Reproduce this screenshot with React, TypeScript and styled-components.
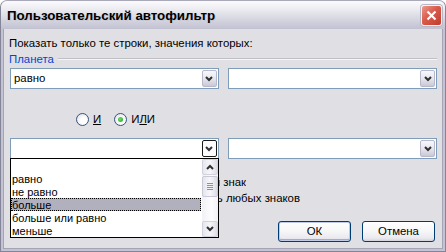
import styled, { createGlobalStyle } from 'styled-components';

const GlobalStyle = createGlobalStyle`
  html, body {
    margin: 0;
    padding: 0;
    background: #ffffff;
    overflow: hidden;
  }
  body {
    font-family: "Liberation Sans", Arial, sans-serif;
    font-size: 11.4px;
    color: #000;
  }
`;

const Window = styled.div`
  width: 446px;
  height: 252px;
  box-sizing: border-box;
  display: flex;
  flex-direction: column;
  background: #c4c3d3;
  border: 1px solid #85859a;
  border-top-color: #a9a9b9;
  border-radius: 7px 7px 0 0;
  overflow: hidden;
`;

const TitleBar = styled.div`
  height: 28px;
  flex: none;
  display: flex;
  align-items: center;
  justify-content: space-between;
  padding: 0 3px 0 6px;
  background: linear-gradient(#fbfbfd 0%, #f1f1f5 20%, #dcdce5 55%, #c2c1d2 100%);
`;

const Title = styled.span`
  font-family: "Liberation Sans", Arial, sans-serif;
  font-weight: bold;
  font-size: 13.3px;
  color: #000;
  text-shadow: 1px 1px 0 #c8c8d2;
`;

const CloseButton = styled.div`
  width: 21px;
  height: 21px;
  box-sizing: border-box;
  border: 1px solid #f4f4f8;
  border-radius: 3px;
  background: linear-gradient(135deg, #ea9a8c 0%, #d9594a 45%, #c03d2e 100%);
  display: flex;
  align-items: center;
  justify-content: center;
  box-shadow: 0 0 0 1px #b6b6c4;
`;

const Content = styled.div`
  flex: 1;
  margin: 0 2px 2px;
  background: #e0dfe3;
  border: 1px solid #a4a4b6;
  border-top: none;
  display: flex;
  flex-direction: column;
  padding: 8px 5px 0 5px;
`;

const Prompt = styled.div`
  line-height: 13px;
`;

const GroupHeader = styled.div`
  display: flex;
  align-items: center;
  gap: 4px;
  margin-top: 3px;
  line-height: 13px;
  color: #0046d5;
`;

const GroupLine = styled.div`
  flex: 1;
  height: 0;
  margin-top: -1px;
  border-top: 1px solid #c0bfc6;
  border-bottom: 1px solid #f6f6f8;
`;

const ComboRow = styled.div<{ $top: number }>`
  display: flex;
  gap: 9px;
  margin-top: ${(p) => p.$top}px;
  padding-left: 1px;
`;

const Combo = styled.div<{ $w: number }>`
  position: relative;
  width: ${(p) => p.$w}px;
  height: 21px;
  box-sizing: border-box;
  border: 1px solid #7f9db9;
  background: #fff;
  display: flex;
  align-items: center;
  justify-content: space-between;
  padding: 1px;
`;

const ComboValue = styled.span`
  padding-left: 2px;
  line-height: 13px;
`;

const DropButton = styled.div<{ $pressed?: boolean }>`
  width: 15px;
  height: 17px;
  box-sizing: border-box;
  display: flex;
  align-items: center;
  justify-content: center;
  border-radius: 2px;
  border: 1px solid ${(p) => (p.$pressed ? '#1a1a1a' : '#b8b8cc')};
  background: ${(p) =>
    p.$pressed ? '#fbfbfd' : 'linear-gradient(#f8f8fb 0%, #e4e4ec 55%, #c9c8d6 100%)'};
`;

const RadioRow = styled.div`
  display: flex;
  align-items: center;
  margin-top: 24px;
  padding-left: 67px;
  height: 13px;
`;

const RadioItem = styled.label`
  display: flex;
  align-items: center;
  gap: 4px;
  margin-right: 13px;
  line-height: 13px;
`;

const RadioCircle = styled.span<{ $checked?: boolean }>`
  width: 13px;
  height: 13px;
  box-sizing: border-box;
  border-radius: 50%;
  border: 1px solid #33557b;
  background: radial-gradient(circle at 60% 60%, #ffffff 30%, #dadae2 100%);
  display: flex;
  align-items: center;
  justify-content: center;
  &::after {
    content: '';
    display: ${(p) => (p.$checked ? 'block' : 'none')};
    width: 5px;
    height: 5px;
    border-radius: 50%;
    background: radial-gradient(circle at 40% 40%, #6fdc6f, #21a121);
  }
`;

const Key = styled.span`
  text-decoration: underline;
`;

const ListPopup = styled.div`
  position: absolute;
  top: 100%;
  left: -1px;
  width: 209px;
  height: 80px;
  box-sizing: border-box;
  border: 1px solid #000;
  background: #fff;
  display: flex;
  z-index: 5;
`;

const ListItems = styled.div`
  flex: 1;
  display: flex;
  flex-direction: column;
  overflow: hidden;
`;

const ListItem = styled.div<{ $selected?: boolean }>`
  height: 13px;
  box-sizing: border-box;
  flex: none;
  padding: 1px 0 0 1px;
  font-size: 11px;
  line-height: 12px;
  margin-right: 1px;
  white-space: nowrap;
  overflow: hidden;
  background: ${(p) => (p.$selected ? '#b1b0bf' : 'transparent')};
  outline: ${(p) => (p.$selected ? '1px dotted #000' : 'none')};
  outline-offset: -1px;
`;

const ScrollBar = styled.div`
  width: 16px;
  flex: none;
  display: flex;
  flex-direction: column;
  justify-content: space-between;
  background: linear-gradient(90deg, #f1f1f5, #fdfdfe 60%, #f3f3f7);
`;

const ScrollButton = styled.div`
  width: 16px;
  height: 16px;
  box-sizing: border-box;
  border: 1px solid #d2d2de;
  border-radius: 2px;
  background: linear-gradient(90deg, #e6e6ee, #f6f6f9 50%, #dddde6);
  display: flex;
  align-items: center;
  justify-content: center;
`;

const ScrollTrack = styled.div`
  flex: 1;
  padding-top: 1px;
`;

const Thumb = styled.div`
  height: 21px;
  box-sizing: border-box;
  border: 1px solid #c8c8d6;
  border-radius: 2px;
  background: linear-gradient(90deg, #e4e4ec, #f7f7fa 50%, #dcdce5);
  display: flex;
  flex-direction: column;
  align-items: center;
  justify-content: center;
  gap: 1px;
`;

const Grip = styled.div`
  width: 6px;
  height: 1px;
  background: #8f8fa2;
`;

const Hint = styled.div<{ $w: number }>`
  width: ${(p) => p.$w}px;
  display: flex;
  justify-content: flex-end;
  overflow: hidden;
  white-space: nowrap;
  line-height: 16px;
`;

const Hints = styled.div`
  margin-top: 15px;
`;

const ButtonRow = styled.div`
  display: flex;
  justify-content: flex-end;
  gap: 11px;
  margin-top: 15px;
  padding-right: 2px;
`;

const Button = styled.div<{ $default?: boolean }>`
  width: 73px;
  height: 21px;
  box-sizing: border-box;
  border: 1px solid #003c74;
  border-radius: 3px;
  background: linear-gradient(#ffffff 0%, #f6f6f8 50%, #e9e9ef 85%, #d3d3dd 100%);
  box-shadow: ${(p) =>
    p.$default ? 'inset 0 0 0 1px #c0cbea, inset 0 -1px 0 1px #9aaddd' : 'none'};
  display: flex;
  align-items: center;
  justify-content: center;
  line-height: 13px;
`;

function Chevron({ up }: { up?: boolean }) {
  return (
    <svg width="8" height="6" viewBox="0 0 8 6">
      <polyline
        points={up ? '1,5 4,2 7,5' : '1,1 4,4 7,1'}
        fill="none"
        stroke="#303034"
        strokeWidth="2"
      />
    </svg>
  );
}

const items = ['', 'равно', 'не равно', 'больше', 'больше или равно', 'меньше'];

export default function App() {
  return (
    <>
      <GlobalStyle />
      <Window>
        <TitleBar>
          <Title>Пользовательский автофильтр</Title>
          <CloseButton>
            <svg width="11" height="11" viewBox="0 0 11 11">
              <path d="M1.5 1.5l8 8M9.5 1.5l-8 8" stroke="#fff" strokeWidth="2.2" />
            </svg>
          </CloseButton>
        </TitleBar>
        <Content>
          <Prompt>Показать только те строки, значения которых:</Prompt>
          <GroupHeader>
            Планета
            <GroupLine />
          </GroupHeader>
          <ComboRow $top={2}>
            <Combo $w={209}>
              <ComboValue>равно</ComboValue>
              <DropButton>
                <Chevron />
              </DropButton>
            </Combo>
            <Combo $w={210}>
              <ComboValue />
              <DropButton>
                <Chevron />
              </DropButton>
            </Combo>
          </ComboRow>
          <RadioRow>
            <RadioItem>
              <RadioCircle />
              <Key>И</Key>
            </RadioItem>
            <RadioItem>
              <RadioCircle $checked />
              <span>
                И<Key>Л</Key>И
              </span>
            </RadioItem>
          </RadioRow>
          <ComboRow $top={12}>
            <Combo $w={209}>
              <ComboValue />
              <DropButton $pressed>
                <Chevron />
              </DropButton>
              <ListPopup>
                <ListItems>
                  {items.map((t, i) => (
                    <ListItem key={i} $selected={t === 'больше'}>
                      {t}
                    </ListItem>
                  ))}
                </ListItems>
                <ScrollBar>
                  <ScrollButton>
                    <Chevron up />
                  </ScrollButton>
                  <ScrollTrack>
                    <Thumb>
                      <Grip />
                      <Grip />
                      <Grip />
                      <Grip />
                    </Thumb>
                  </ScrollTrack>
                  <ScrollButton>
                    <Chevron />
                  </ScrollButton>
                </ScrollBar>
              </ListPopup>
            </Combo>
            <Combo $w={210}>
              <ComboValue />
              <DropButton>
                <Chevron />
              </DropButton>
            </Combo>
          </ComboRow>
          <Hints>
            <Hint $w={237}>Знак ? обозначает любой единичный знак</Hint>
            <Hint $w={291}>Знак * обозначает последовательность любых знаков</Hint>
          </Hints>
          <ButtonRow>
            <Button $default>ОК</Button>
            <Button>Отмена</Button>
          </ButtonRow>
        </Content>
      </Window>
    </>
  );
}
